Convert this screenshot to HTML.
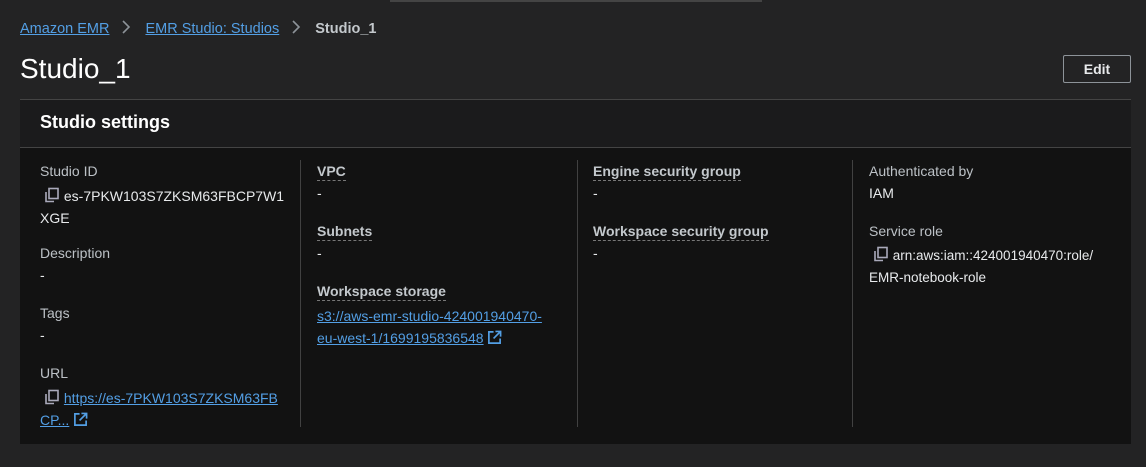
<!DOCTYPE html>
<html><head><style>
*{margin:0;padding:0;box-sizing:border-box}
body{width:1146px;height:467px;background:#232324;font-family:"Liberation Sans",sans-serif;color:#d5dbdb;position:relative;overflow:hidden;font-size:14px}
.a{position:absolute;white-space:nowrap}
a{color:#539fe5;text-decoration:underline}
.lbl{color:#bcc1c6}
.b{font-weight:bold;color:#c3c8cc;border-bottom:1px dashed #777;padding-bottom:1px}
.v{color:#e8eaec}
.div{position:absolute;top:160px;height:267px;width:1px;background:#414141}
svg{vertical-align:-2px}
</style></head><body>
<div class="a" style="left:390px;top:0;width:372px;height:2px;background:#444"></div>
<div class="a" style="left:20px;top:19px;font-size:14.5px"><a>Amazon EMR</a><svg width="36" height="16" viewBox="0 0 36 16"><path d="M14 2l6 6-6 6" fill="none" stroke="#8d9399" stroke-width="1.6"/></svg><a>EMR Studio: Studios</a><svg width="36" height="16" viewBox="0 0 36 16"><path d="M14 2l6 6-6 6" fill="none" stroke="#8d9399" stroke-width="1.6"/></svg><span style="color:#c3c8cc;font-weight:bold">Studio_1</span></div>
<div class="a" style="left:20px;top:53px;font-size:28px;color:#fff">Studio_1</div>
<div class="a" style="left:1063px;top:55px;width:68px;height:28px;border:1px solid #8d9399;border-radius:2px;color:#e8eaec;font-weight:bold;text-align:center;line-height:26px">Edit</div>
<div class="a" style="left:20px;top:99px;width:1111px;height:49px;background:#1b1b1c;border-top:1px solid #444;border-bottom:1px solid #444"></div>
<div class="a" style="left:40px;top:112px;font-size:18px;font-weight:bold;color:#fff">Studio settings</div>
<div class="a" style="left:20px;top:148px;width:1111px;height:296px;background:#121212"></div>
<div class="div" style="left:300px"></div><div class="div" style="left:577px"></div><div class="div" style="left:852px"></div>

<div class="a lbl" style="left:40px;top:163px">Studio ID</div>
<div class="a v" style="left:44px;top:185px;line-height:22px"><svg width="16" height="16" viewBox="0 0 16 16"><rect x="5" y="1.5" width="9" height="10" fill="none" stroke="#aab" stroke-width="1.6"/><path d="M2 5v9.5h8" fill="none" stroke="#aab" stroke-width="1.6"/></svg> es-7PKW103S7ZKSM63FBCP7W1<br><span style="margin-left:-4px">XGE</span></div>
<div class="a lbl" style="left:40px;top:245px">Description</div>
<div class="a v" style="left:40px;top:267px">-</div>
<div class="a lbl" style="left:40px;top:305px">Tags</div>
<div class="a v" style="left:40px;top:327px">-</div>
<div class="a lbl" style="left:40px;top:365px">URL</div>
<div class="a" style="left:44px;top:387px;line-height:22px"><svg width="16" height="16" viewBox="0 0 16 16"><rect x="5" y="1.5" width="9" height="10" fill="none" stroke="#aab" stroke-width="1.6"/><path d="M2 5v9.5h8" fill="none" stroke="#aab" stroke-width="1.6"/></svg> <a>https://es-7PKW103S7ZKSM63FB</a><br><a style="margin-left:-4px">CP...</a> <svg width="15" height="15" viewBox="0 0 16 16"><path d="M7 2H2v12h12V9M9 1.5h5.5V7M14.5 1.5L7 9" fill="none" stroke="#539fe5" stroke-width="1.8"/></svg></div>

<div class="a" style="left:317px;top:163px"><span class="b">VPC</span></div>
<div class="a v" style="left:317px;top:185px">-</div>
<div class="a" style="left:317px;top:223px"><span class="b">Subnets</span></div>
<div class="a v" style="left:317px;top:245px">-</div>
<div class="a" style="left:317px;top:283px"><span class="b">Workspace storage</span></div>
<div class="a" style="left:317px;top:305px;line-height:22px"><a>s3://aws-emr-studio-424001940470-</a><br><a>eu-west-1/1699195836548</a> <svg width="15" height="15" viewBox="0 0 16 16"><path d="M7 2H2v12h12V9M9 1.5h5.5V7M14.5 1.5L7 9" fill="none" stroke="#539fe5" stroke-width="1.8"/></svg></div>

<div class="a" style="left:593px;top:163px"><span class="b">Engine security group</span></div>
<div class="a v" style="left:593px;top:185px">-</div>
<div class="a" style="left:593px;top:223px"><span class="b">Workspace security group</span></div>
<div class="a v" style="left:593px;top:245px">-</div>

<div class="a lbl" style="left:869px;top:163px">Authenticated by</div>
<div class="a v" style="left:869px;top:185px">IAM</div>
<div class="a lbl" style="left:869px;top:223px">Service role</div>
<div class="a v" style="left:873px;top:245px;line-height:22px;font-size:13.5px"><svg width="16" height="16" viewBox="0 0 16 16"><rect x="5" y="1.5" width="9" height="10" fill="none" stroke="#aab" stroke-width="1.6"/><path d="M2 5v9.5h8" fill="none" stroke="#aab" stroke-width="1.6"/></svg> arn:aws:iam::424001940470:role/<br><span style="margin-left:-4px">EMR-notebook-role</span></div>
</body></html>
